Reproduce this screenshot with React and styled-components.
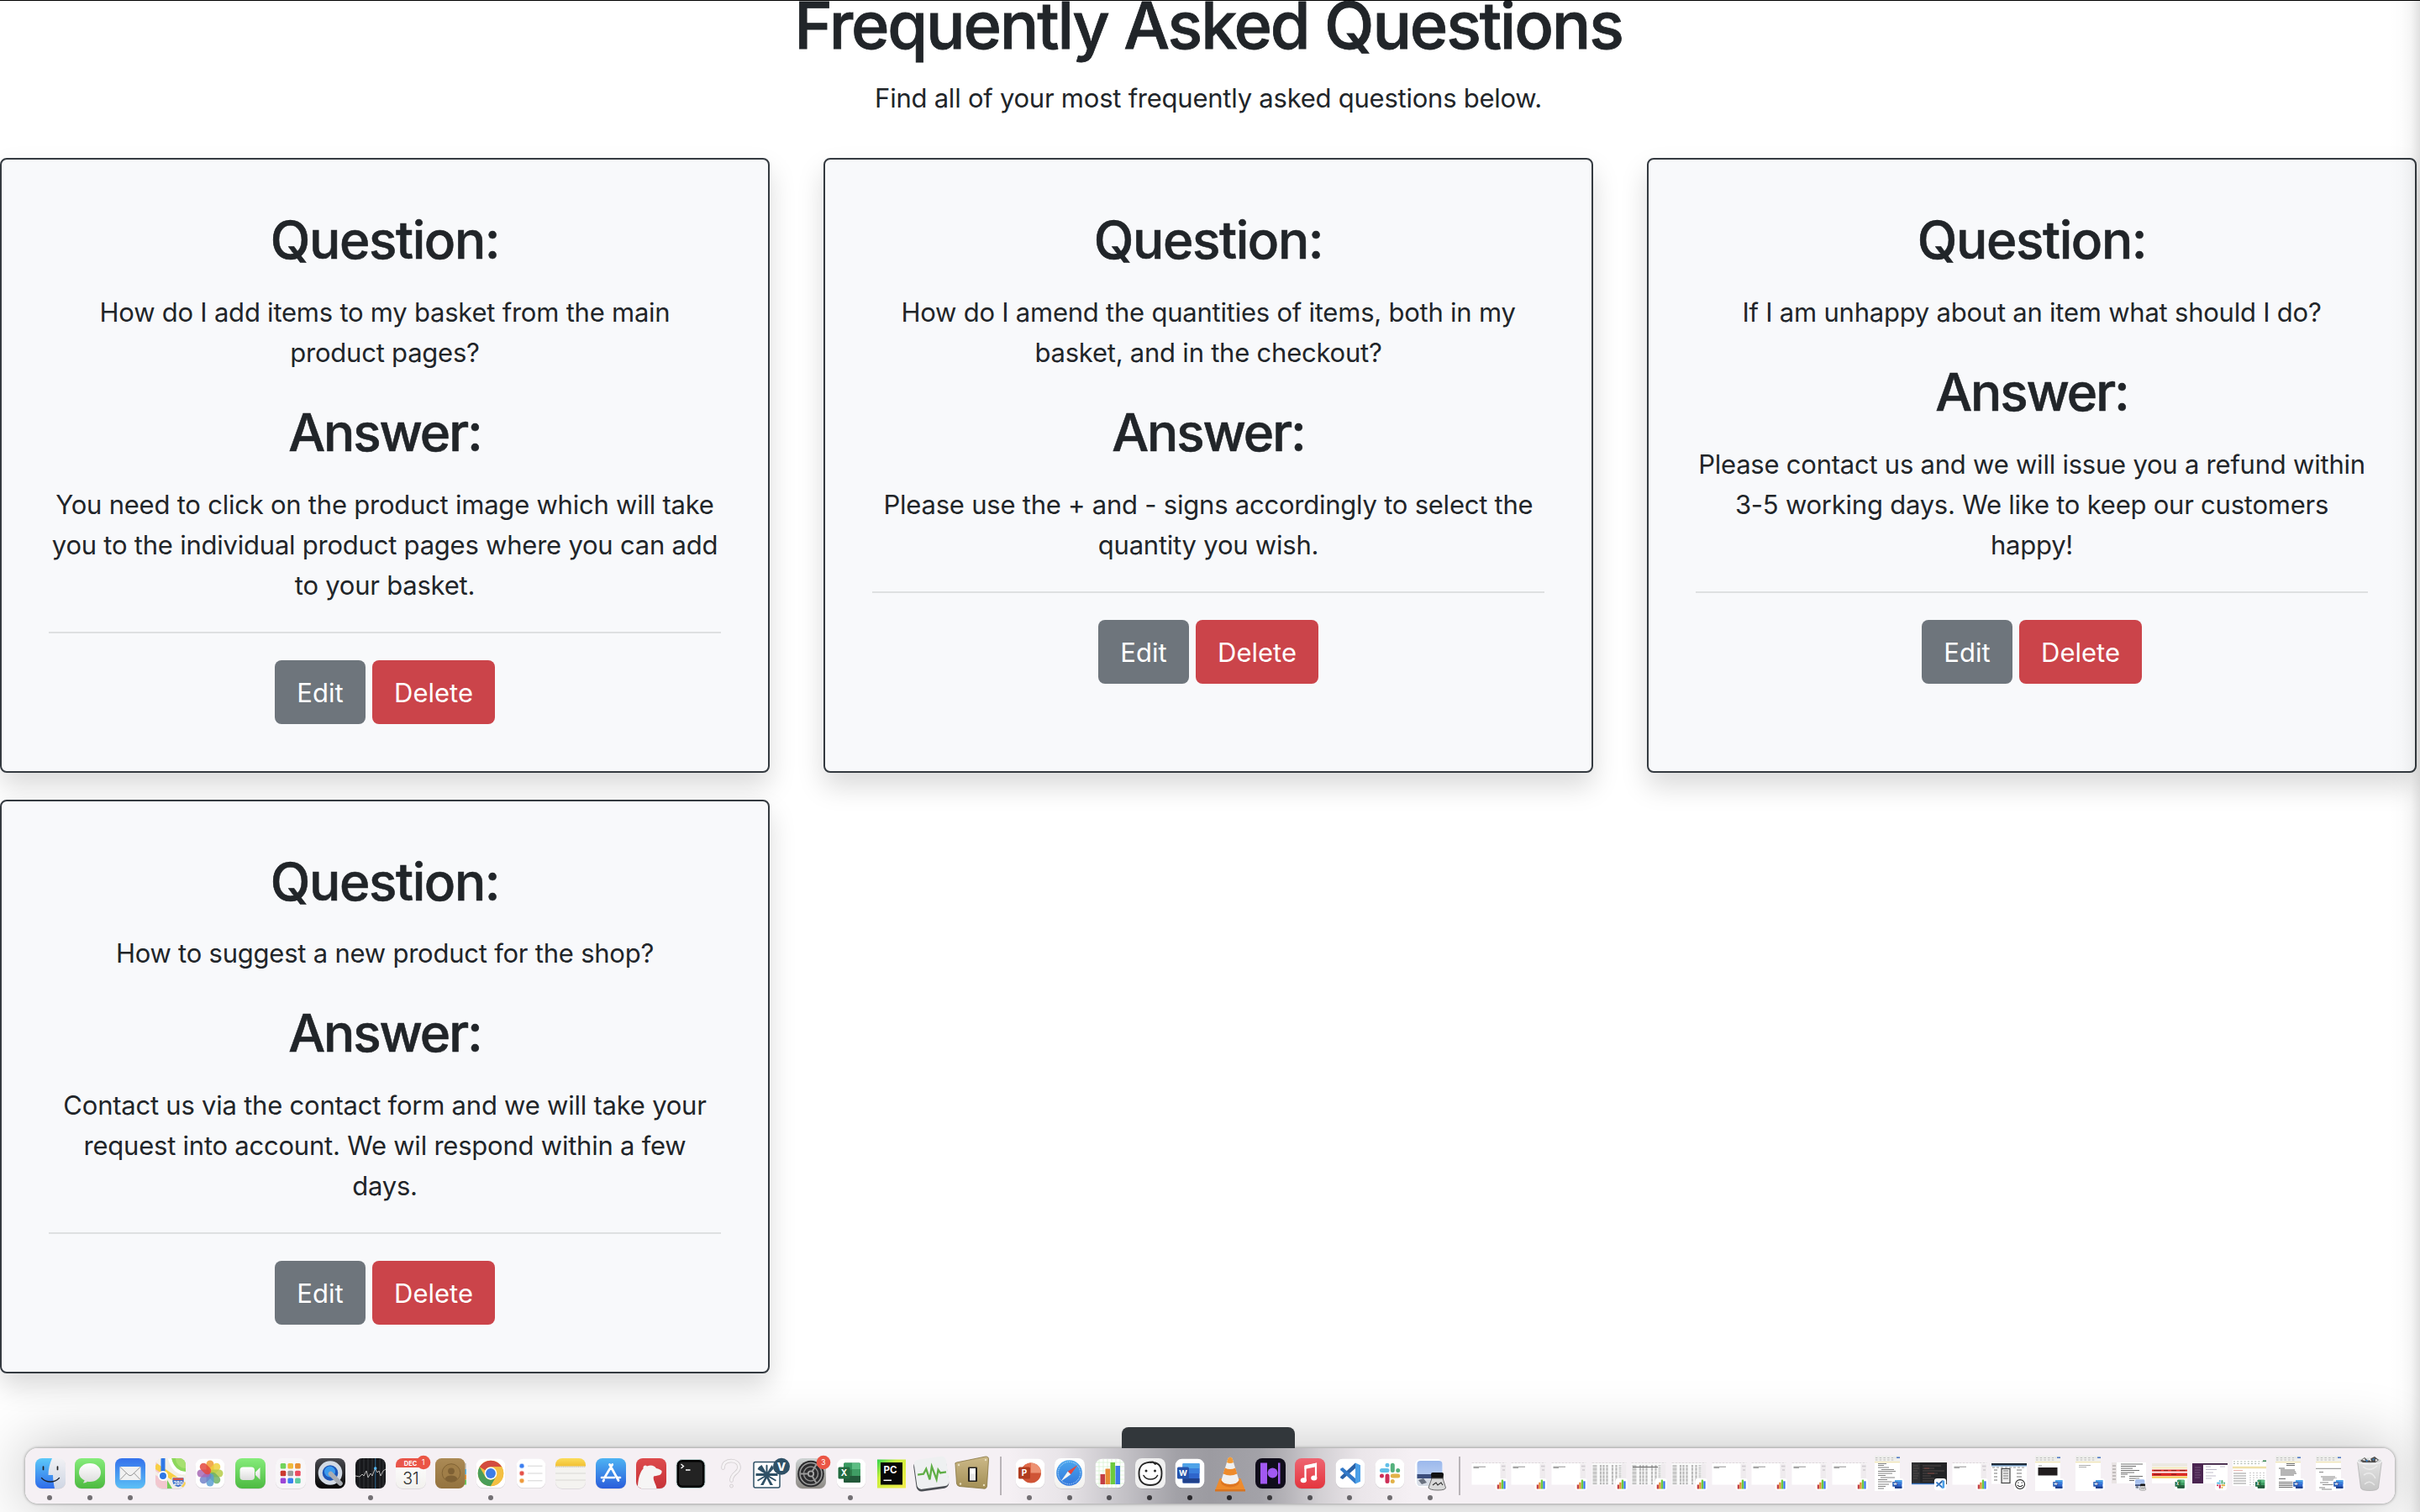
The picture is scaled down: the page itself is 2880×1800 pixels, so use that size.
import React from "react";
import styled, { createGlobalStyle } from "styled-components";

const GlobalStyle = createGlobalStyle`
  *, *::before, *::after { box-sizing: border-box; }
  html, body { margin: 0; padding: 0; background: #fff; overflow: hidden; }
  body {
    font-family: Inter, "Liberation Sans", sans-serif;
    font-size: 31px;
    line-height: 48px;
    color: #212529;
  }
`;

const Screen = styled.div`
  position: relative;
  width: 2880px;
  height: 1800px;
  overflow: hidden;
  border-top: 1px solid #000;
  background: #fff;
`;

const Page = styled.main`
  width: 2876px;
  text-align: center;
`;

const PageTitle = styled.h1`
  margin: -19px 0 15px;
  font-size: 77.5px;
  line-height: 96px;
  font-weight: 500;
  letter-spacing: -2.2px;
  -webkit-text-stroke: 0.8px currentColor;
`;

const Lead = styled.p`
  margin: 0 0 47px;
  letter-spacing: -0.24px;
`;

const CardGrid = styled.section`
  display: grid;
  grid-template-columns: repeat(3, 916px);
  column-gap: 64px;
  row-gap: 32px;
`;

const Card = styled.article`
  padding: 58px 56px 56px;
  border: 2px solid #343a40;
  border-radius: 8px;
  background: #f8f9fb;
  box-shadow: 0 16px 32px rgba(0, 0, 0, 0.15);
`;

const CardHeading = styled.h2`
  margin: 0 0 23px;
  font-size: 62px;
  line-height: 76.8px;
  font-weight: 500;
  letter-spacing: ${(p) => p.$tracking}px;
  -webkit-text-stroke: 0.6px currentColor;
`;

const CardText = styled.p`
  margin: 0 -20px ${(p) => (p.$last ? 31 : 33)}px;
  white-space: pre-line;
  letter-spacing: -0.23px;
`;

const Rule = styled.hr`
  margin: 0 0 32px;
  border: 0;
  height: 2px;
  background: #dee0e1;
`;

const Actions = styled.div`
  display: flex;
  justify-content: center;
  gap: 8px;
`;

const Button = styled.button`
  width: ${(p) => (p.$danger ? 146 : 108)}px;
  height: 76px;
  padding: 2px 0 0;
  border: 0;
  border-radius: 8px;
  background: ${(p) => (p.$danger ? "#cb444a" : "#6e757c")};
  color: #fff;
  font: inherit;
  letter-spacing: 0;
`;

const EdgeShade = styled.div`
  position: absolute;
  top: 0;
  right: 0;
  width: 36px;
  height: 1800px;
  background: linear-gradient(90deg, rgba(0,0,0,0) 0%, rgba(0,0,0,0.01) 40%, rgba(0,0,0,0.04) 70%, rgba(0,0,0,0.12) 100%);
`;

const DockLayer = styled.div`
  position: absolute;
  left: 30px;
  bottom: 10px;
  width: 2820px;
  display: flex;
  flex-direction: column;
`;

const FooterTab = styled.div`
  width: 206px;
  height: 25px;
  margin-left: 1305px;
  border-radius: 8px 8px 0 0;
  background: #32373b;
  z-index: 1;
`;

const DockBar = styled.nav`
  display: flex;
  height: 66px;
  padding-left: 6px;
  border-radius: 15px;
  background: linear-gradient(
    90deg,
    #f5f0f4 41.5%,
    #e9e5e9 43.7%,
    #c2c0c5 46.5%,
    #a2a1a7 48.6%,
    #9c9ba1 50%,
    #a3a2a8 52.1%,
    #b5b3b8 53.2%,
    #d2cfd3 54.6%,
    #ebe6ea 56.4%,
    #f5f0f4 58.5%
  );
  box-shadow: 0 0 3px 1px rgba(0, 0, 0, 0.26), 0 0 76px 4px rgba(0, 0, 0, 0.24);
`;

const Slot = styled.div`
  flex: 0 0 47.67px;
  display: flex;
  flex-direction: column;
  align-items: center;
  gap: 4px;
  padding-top: 8px;
`;

const Art = styled.svg`
  display: block;
  flex: none;
  width: 44px;
  height: 44px;
  overflow: visible;
`;

const RunningDot = styled.span`
  width: 6px;
  height: 6px;
  margin-right: 1px;
  border-radius: 50%;
  background: ${(p) => p.$color || "#737074"};
`;

const Separator = styled.span`
  flex: none;
  width: 2px;
  height: 46px;
  margin: 10px 10px 0;
  background: #b9b4b8;
`;

const HiddenDefs = styled.svg`
  position: absolute;
`;

const Gradients = () => (
  <HiddenDefs width="0" height="0">
    <defs>
      {[
        ["gFinder", "#5cc9f9", "#2f6bea"],
        ["gFinderR", "#f1f1f4", "#cfd6e4"],
        ["gGreen", "#86ec7b", "#4dba41"],
        ["gWhite", "#ffffff", "#dcdcdc"],
        ["gMail", "#3471ec", "#5cc0f6"],
        ["gPaper", "#ffffff", "#f2f1ee"],
        ["gDark", "#4a4a50", "#050505"],
        ["gStore", "#4db3f3", "#2a5ddb"],
        ["gMusic", "#ee6572", "#e4363f"],
        ["gBrown", "#ab8a55", "#94733f"],
        ["gBlueDisc", "#4aa6ee", "#3277dc"],
        ["gGrey", "#cfd4d4", "#8c8984"],
        ["gSky", "#9bb8ec", "#c9d9f4"],
        ["gYellow", "#fbdc5a", "#f2c033"],
        ["gBear", "#dd4a4c", "#c73238"],
        ["gPlate", "#ccb988", "#a38f56"],
        ["gTrash", "#e4e4e4", "#c6c6c6"],
      ].map(([id, a, b]) => (
        <linearGradient key={id} id={id} x1="0" y1="0" x2="0" y2="1">
          <stop offset="0" stopColor={a} />
          <stop offset="1" stopColor={b} />
        </linearGradient>
      ))}
      <linearGradient id="gRainbow" x1="0" y1="0" x2="1" y2="1">
        <stop offset="0" stopColor="#2fd34f" />
        <stop offset=".35" stopColor="#c9ef3c" />
        <stop offset="1" stopColor="#f3ec4a" />
      </linearGradient>
      <clipPath id="tile"><rect width="36" height="36" rx="8" /></clipPath>
    </defs>
  </HiddenDefs>
);

const Tile = ({ fill, children }) => (
  <>
    <rect y=".7" width="36" height="36" rx="8" fill="#000" opacity=".13" />
    <rect width="36" height="36" rx="8" fill={fill} />
    <g clipPath="url(#tile)">{children}</g>
  </>
);

const WhiteTile = ({ children }) => (
  <>
    <rect x=".7" y="1.4" width="34.6" height="34.6" rx="8" fill="#000" opacity=".12" />
    <rect x=".7" y=".7" width="34.6" height="34.6" rx="8" fill="#fff" />
    {children}
  </>
);

const Txt = ({ x, y, size, fill = "#fff", weight = 700, children }) => (
  <text x={x} y={y} fontSize={size} fill={fill} fontWeight={weight} textAnchor="middle" fontFamily="Inter, sans-serif">
    {children}
  </text>
);

const Finder = () => (
  <Tile fill="url(#gFinderR)">
    <path d="M0 0H20C17 7 15.500 13 15.500 20H21C21 26 22 31 23 36H0Z" fill="url(#gFinder)" />
    <path d="M9.500 10v3.500M26.500 10v3.500" stroke="#222" strokeWidth="1.700" strokeLinecap="round" />
    <path d="M7.500 23.500C13 29.500 23 29.500 28.500 23.500" fill="none" stroke="#1d2430" strokeWidth="1.300" strokeLinecap="round" />
  </Tile>
);

const Messages = () => (
  <Tile fill="url(#gGreen)">
    <path d="M18 6C25.500 6 31 10.700 31 17S25.500 28 18 28C17 28 16 27.900 15 27.700C13.500 29 11.500 29.600 9.800 29.300C10.900 28.300 11.500 27.200 11.500 26.200C7.500 24.300 5 21 5 17C5 10.700 10.500 6 18 6Z" fill="url(#gWhite)" />
  </Tile>
);

const Mail = () => (
  <Tile fill="url(#gMail)">
    <rect x="5.500" y="10" width="25" height="16" rx="1" fill="#f1f1f1" />
    <path d="M6 10.500L16 20Q18 21.500 20 20L30 10.500M6 25.500L13.500 17.700M30 25.500L22.500 17.700" fill="none" stroke="#8d8d8d" strokeWidth=".9" />
  </Tile>
);

const Maps = () => (
  <Tile fill="#f3efe6">
    <path d="M16 0H36V20Q22 18 16 0Z" fill="#8dd85b" />
    <path d="M17 0Q21 17 36 18" fill="none" stroke="#fff" strokeWidth="4" />
    <circle cx="36" cy="0" r="12" fill="#a7e070" />
    <path d="M0 4L8 12V21L0 15Z" fill="#f7c9d2" />
    <path d="M0 20L14 28V36H0Z" fill="#f2c7cf" />
    <path d="M0 9L36 33" stroke="#f8cf45" strokeWidth="6.500" />
    <path d="M14 26L20 36H14Z" fill="#74cc58" />
    <rect x="6.500" width="5" height="20" fill="#2f78e6" />
    <circle cx="9" cy="21" r="5" fill="#2f78e6" stroke="#fff" strokeWidth="2" />
    <path d="M20 23H34V28Q33 33 27 34.500Q21 33 20 28Z" fill="#3b6bc4" stroke="#fff" strokeWidth=".7" />
    <rect x="21" y="23.500" width="12" height="2.500" fill="#d9534a" />
    <Txt x="27" y="31.500" size="5.500">280</Txt>
  </Tile>
);

const petals = ["#f09a2e", "#eed13a", "#b5cc46", "#6fb264", "#5a9dd2", "#7182c8", "#a768b4", "#e4483d"];
const Photos = () => (
  <WhiteTile>
    {petals.map((c, i) => (
      <rect key={c} x="13.500" y="2.500" width="9" height="15.500" rx="4.500" fill={c} opacity=".84" transform={`rotate(${i * 45} 18 18)`} />
    ))}
  </WhiteTile>
);

const FaceTime = () => (
  <Tile fill="url(#gGreen)">
    <rect x="5.500" y="10.500" width="17.500" height="15.500" rx="4" fill="url(#gWhite)" />
    <path d="M24 16.500L29.500 11V25.500L24 20Z" fill="url(#gWhite)" />
  </Tile>
);

const gridColors = ["#71d35a", "#f0b83a", "#e88f34", "#cb3a2f", "#9c9c9c", "#ec4c62", "#9b45d6", "#3b80f0", "#5ecba1"];
const Launchpad = () => (
  <Tile fill="#f8f6f8">
    {gridColors.map((c, i) => (
      <rect key={c} x={5.700 + (i % 3) * 8.700} y={6 + Math.floor(i / 3) * 8.700} width="6.600" height="6.600" rx="1.500" fill={c} />
    ))}
  </Tile>
);

const QuickTime = () => (
  <Tile fill="url(#gDark)">
    <circle cx="18" cy="17.500" r="11.800" fill="#1e57b8" stroke="#d3dae4" strokeWidth="5" />
    <circle cx="17.500" cy="16" r="6.500" fill="#3b9bef" />
    <path d="M18.500 18.500L30 30" stroke="#a9adb3" strokeWidth="5.500" strokeLinecap="round" />
  </Tile>
);

const Stocks = () => (
  <Tile fill="#17181b">
    <path d="M5 0V36M10 0V36M15 0V36M20 0V36M29 0V36M33 0V36" stroke="#34363b" strokeWidth="1" />
    <path d="M23.700 0V36" stroke="#2c5f82" strokeWidth="1.200" />
    <path d="M0 21L5 22L8 19L10 21L13 15L15 23L18 18L20 21L23.500 12L26 17L28 15L30 21L33 15L36 13" fill="none" stroke="#c8c8c8" strokeWidth=".9" />
    <circle cx="23.700" cy="12" r="1.800" fill="#55b5f0" />
  </Tile>
);

const Badge = ({ children }) => (
  <>
    <circle cx="33" cy="5" r="8.300" fill="#eb5545" />
    <Txt x="32.800" y="8" size="8.500" weight="400">{children}</Txt>
  </>
);

const Calendar = () => (
  <>
    <Tile fill="url(#gPaper)">
      <rect width="36" height="11" fill="#e9564b" />
      <Txt x="17.500" y="8.500" size="7.500">DEC</Txt>
      <Txt x="18" y="30.500" size="19.500" fill="#2b2b2b" weight="300">31</Txt>
    </Tile>
    <Badge>1</Badge>
  </>
);

const Contacts = () => (
  <>
    <rect x="31" y="6" width="6" height="7" fill="#c9c9c9" />
    <rect x="31" y="13" width="6" height="6.500" fill="#55b8ee" />
    <rect x="31" y="19.500" width="6" height="6" fill="#e9963a" />
    <rect x="31" y="25.500" width="6" height="6" fill="#64cf5d" />
    <rect width="35.500" height="36" rx="7.500" fill="url(#gBrown)" />
    <circle cx="19" cy="17.500" r="10.800" fill="#a07e48" stroke="#7e6032" strokeWidth=".9" />
    <circle cx="19" cy="15.300" r="3.900" fill="#7f6134" />
    <path d="M11.500 24.500Q13 20.500 19 20.500T26.500 24.500Q23.500 28 19 28T11.500 24.500Z" fill="#7f6134" />
  </>
);

const Chrome = () => (
  <WhiteTile>
    <circle cx="18" cy="18" r="15.300" fill="#f3bf42" />
    <path d="M4.750 10.350A15.300 15.300 0 0 1 31.250 10.350H18A7.600 7.600 0 0 0 11.400 14.200Z" fill="#d34b3f" />
    <path d="M4.750 10.350A15.300 15.300 0 0 0 18 33.300L24.600 21.800A7.600 7.600 0 0 1 11.400 21.800Z" fill="#4a9e58" />
    <path d="M18 10.350H31.250A15.300 15.300 0 0 1 18 33.300L24.600 21.800Z" fill="#f3bf42" />
    <circle cx="18" cy="18" r="7.400" fill="#fff" />
    <circle cx="18" cy="18" r="5.900" fill="#3d7de6" />
  </WhiteTile>
);

const Reminders = () => (
  <WhiteTile>
    {["#3d7ff0", "#e5534a", "#ee9b3c"].map((c, i) => (
      <g key={c}>
        <circle cx="7" cy={9.200 + i * 8.800} r="2.400" fill={c} stroke={c} strokeOpacity=".35" strokeWidth="1.500" />
        <path d={`M14 ${9.200 + i * 8.800}H31.500`} stroke="#cfcfcf" strokeWidth=".9" />
      </g>
    ))}
  </WhiteTile>
);

const Notes = () => (
  <Tile fill="#f4f3f0">
    <rect width="36" height="9.500" fill="url(#gYellow)" />
    <path d="M0 10.200H36" stroke="#b5b0a4" strokeWidth=".9" strokeDasharray="1 .8" />
    <path d="M0 18H36M0 26H36" stroke="#d9d8d4" strokeWidth="1" />
  </Tile>
);

const AppStore = () => (
  <Tile fill="url(#gStore)">
    <path d="M19.800 7.500L10.500 23M7 23H22M26 23H29M16.500 7.500L27 26.500M9.600 26L8.900 27.200" stroke="#fff" strokeWidth="2.700" strokeLinecap="round" fill="none" />
  </Tile>
);

const Bear = () => (
  <Tile fill="url(#gBear)">
    <path d="M2 36C2 24 5 16 8.500 12.500C8 9 11 7.500 13 9.500C18 7.500 22 9 24 12C27 12.500 29 13.500 30.500 15C31 17 30 19 28 20C25 21 22 21 21 21.500C19.500 26 24 31 24.500 36Z" fill="#f6f5f5" />
  </Tile>
);

const Terminal = () => (
  <>
    <rect x="1" y="1.500" width="34" height="34" rx="7" fill="#000" stroke="#b9cfcf" strokeWidth="1" />
    <rect x="4" y="4.500" width="28" height="28" rx="4" fill="#232323" />
    <path d="M6.500 7L9.500 9.500L6.500 12M12 14H17.500" fill="none" stroke="#fff" strokeWidth="1.300" />
  </>
);

const Unknown = () => (
  <>
    <path d="M8.500 11.500C8.500 6 12.500 3 18 3S27.500 6 27.500 11C27.500 18 18.500 17 18.500 26.500" fill="none" stroke="#cfcacd" strokeWidth="4.500" strokeLinecap="round" />
    <path d="M8.500 11.500C8.500 6 12.500 3 18 3S27.500 6 27.500 11C27.500 18 18.500 17 18.500 26.500" fill="none" stroke="#f5f2f4" strokeWidth="3" strokeLinecap="round" />
    <circle cx="18.500" cy="33" r="2" fill="#f2eef1" stroke="#cfcacd" strokeWidth=".8" />
  </>
);

const VApp = () => (
  <>
    <rect x="-3" y="4.500" width="31" height="30.500" rx="2" fill="#fff" stroke="#2f5166" strokeWidth="1.500" />
    <path d="M6.500 8L11.500 16.500V8.500L12.500 7.500L13.500 8.500V16.500L18.500 8L21 12L15.500 18H25.500V21H15.500L24 26L23 27.500L14.500 22.500L20 32H16.500L12.500 24L8.500 32H5L10.500 22.500L2 27.500L1 26L9.500 21H-.5V18H9.500L1.500 13L3 10.500Z" fill="#2f5166" />
    <circle cx="30" cy="9.700" r="10" fill="#2f5166" />
    <Txt x="30" y="14.800" size="13.500" weight="800">V</Txt>
  </>
);

const Settings = () => (
  <>
    <Tile fill="url(#gGrey)">
      <circle cx="18" cy="18.500" r="15.800" fill="#2c2c2e" />
      <circle cx="18" cy="18.500" r="13" fill="none" stroke="#9b9b9b" strokeWidth="1.600" />
      <circle cx="18" cy="18.500" r="8.500" fill="none" stroke="#8e8e8e" strokeWidth="1.500" />
      <circle cx="18" cy="18.500" r="3.200" fill="#2c2c2e" stroke="#a8a8a8" strokeWidth="1.800" />
      {[30, 150, 270].map((a) => (
        <path key={a} d="M18 15V6" stroke="#9b9b9b" strokeWidth="2" transform={`rotate(${a} 18 18.500)`} />
      ))}
    </Tile>
    <Badge>3</Badge>
  </>
);

const ExcelMark = () => (
  <>
    <rect x="9" y="5.500" width="20" height="23.500" rx="1.500" fill="#2f7e4a" />
    <path d="M10 5.500H19V13.500H9V6.500Z" fill="#399a61" />
    <path d="M19 5.500H28L29 6.500V13.500H19Z" fill="#5dbd83" />
    <path d="M19 13.500H29V21H19Z" fill="#3f9d64" />
    <path d="M9 21H29V28L28 29H10L9 28Z" fill="#23593a" />
    <rect x="2.500" y="10.500" width="14" height="14" rx="1.500" fill="#236b40" />
    <Txt x="9.500" y="21.200" size="10">X</Txt>
  </>
);
const Excel = () => <WhiteTile><ExcelMark /></WhiteTile>;

const PyCharm = () => (
  <>
    <rect x="1" y="1.500" width="34" height="34" fill="url(#gRainbow)" />
    <rect x="5" y="5" width="26" height="26.500" fill="#070707" />
    <Txt x="16.500" y="17.800" size="11.500">PC</Txt>
    <path d="M8.500 26.300H18" stroke="#fff" strokeWidth="1.500" />
  </>
);

const Activity = () => (
  <g transform="rotate(-8 18 18)">
    <rect x="-1.500" y="1.700" width="39" height="36" rx="6" fill="#4b4f54" />
    <rect x="-.5" y="-.3" width="38.500" height="35.500" rx="5.500" fill="#eef0f1" />
    <path d="M2 17.500H9L13 12L15.500 25L20 10L23.500 26L27 15L29 19H36" fill="none" stroke="#5fae45" strokeWidth="2.300" />
  </g>
);

const Switcher = () => (
  <>
    <path d="M-1 7Q-2 5.500 .5 5L35 -2Q39 -2 38.500 2L36.500 33Q36 37 32 36L4 33.500Q1 33 .5 30Z" fill="url(#gPlate)" stroke="#85733f" strokeWidth=".8" />
    <rect x="14" y="10.500" width="11" height="17.500" rx="1" fill="#23211e" />
    <rect x="16" y="12" width="7" height="14.500" fill="#e8e8e8" />
    <rect x="16" y="12" width="7" height="6.500" fill="#fff" />
    {[[3, 8], [35, 2], [5, 30.500], [33, 32]].map(([x, y]) => <circle key={x} cx={x} cy={y} r="1.200" fill="#e9e0c2" />)}
  </>
);

const PowerPoint = () => (
  <WhiteTile>
    <circle cx="19" cy="17.500" r="12" fill="#cf5436" />
    <path d="M19 5.500A12 12 0 0 1 31 17.500H19Z" fill="#ed9273" />
    <path d="M7 17.500A12 12 0 0 1 19 5.500V17.500Z" fill="#e06b4b" />
    <rect x="4" y="10.500" width="14" height="14" rx="1.500" fill="#b03c1f" />
    <Txt x="11" y="21" size="10">P</Txt>
  </WhiteTile>
);

const Safari = () => (
  <Tile fill="url(#gPaper)">
    <circle cx="17.500" cy="17.500" r="15.300" fill="url(#gBlueDisc)" />
    <circle cx="17.500" cy="17.500" r="13.200" fill="none" stroke="#b9dbf7" strokeWidth="1.400" strokeDasharray=".6 1.100" />
    <path d="M27.500 8L19.300 19.300L15.700 15.700Z" fill="#e3483f" />
    <path d="M7.500 27.500L15.700 15.700L19.300 19.300Z" fill="#f3f3f3" />
  </Tile>
);

const ChartBars = () => (
  <>
    <rect x="6.500" y="19" width="5.500" height="12" fill="#c33f45" />
    <rect x="12.500" y="12.500" width="5.500" height="18.500" fill="#e88b33" />
    <rect x="18.500" y="5" width="5.500" height="26" fill="#6dca3e" />
    <rect x="24.500" y="9" width="5.500" height="22" fill="#3b7ae8" />
  </>
);

const Numbers = () => (
  <WhiteTile>
    <path d="M5 1V35M10 1V35M15 1V35M20 1V35M25 1V35M30 1V35M1 5H35M1 10H35M1 15H35M1 20H35M1 25H35M1 30H35" stroke="#d3f0cb" strokeWidth=".7" />
    <ChartBars />
  </WhiteTile>
);

const Smiley = () => (
  <Tile fill="#f0f0f0">
    <path d="M18 5C27 4 31.500 9 31.500 18C31.500 28 27 32 18 32S4.500 28 4.500 18C4.500 9 9 4.500 21 4.500L24 7" fill="#fff" stroke="#262626" strokeWidth="1.900" strokeLinecap="round" />
    <circle cx="13" cy="15" r="1.500" fill="#262626" />
    <circle cx="23.500" cy="15" r="1.500" fill="#262626" />
    <path d="M10 20.500C13 26.500 23.500 26.500 26.500 20.500" fill="none" stroke="#262626" strokeWidth="1.600" strokeLinecap="round" />
  </Tile>
);

const WordMark = () => (
  <>
    <rect x="9.500" y="6" width="20" height="23.500" rx="1.500" fill="#2f66cc" />
    <path d="M9.500 6H29.500V12H9.500Z" fill="#4fa3e8" />
    <path d="M9.500 12H29.500V18H9.500Z" fill="#3a7fdd" />
    <path d="M9.500 24H29.500V29.500H9.500Z" fill="#20418c" />
    <rect x="3" y="10.500" width="14" height="14" rx="1.500" fill="#2553ab" />
    <Txt x="10" y="21" size="9.500">W</Txt>
  </>
);
const Word = () => <WhiteTile><WordMark /></WhiteTile>;

const Vlc = () => (
  <>
    <path d="M5.500 24H30.500L36 38.500H0Z" fill="#ee8b2c" />
    <path d="M0 37H36V39.500H0Z" fill="#d77420" />
    <path d="M15.500 0Q18 -2.500 20.500 0L28.500 26Q27 31 18 31T7.500 26Z" fill="#f0f0f0" />
    <path d="M15.500 0Q18 -2.500 20.500 0L22 5Q18 7 14 5Z" fill="#f29a35" />
    <path d="M11.800 11.500Q18 14.500 24.200 11.500L26.300 18.500Q18 22.500 9.700 18.500Z" fill="#ee8b2c" />
    <path d="M7.500 26Q9 31 18 31T28.500 26Q31 33 18 34.500Q5 33 7.500 26Z" fill="#de7621" />
  </>
);

const HApp = () => (
  <Tile fill="#100d1b">
    <rect x="6" y="5.500" width="8" height="25" fill="#a259f2" />
    <circle cx="20.500" cy="17.500" r="6" fill="#a259f2" />
    <rect x="27" y="5.500" width="2.500" height="25" fill="#a259f2" />
  </Tile>
);

const Music = () => (
  <Tile fill="url(#gMusic)">
    <path d="M12.500 26V10L25 7V23" fill="none" stroke="#fff" strokeWidth="2.200" />
    <path d="M11.500 8.500L26 5.500V10L11.500 13Z" fill="#fff" />
    <ellipse cx="10.300" cy="26.300" rx="3.600" ry="3" fill="#fff" />
    <ellipse cx="22.800" cy="23.500" rx="3.600" ry="3" fill="#fff" />
  </Tile>
);

const CodeMark = () => (
  <>
    <path d="M24 5.500L30 8.300V27.700L24 30.500Z" fill="#4a9fe8" />
    <path d="M24 5.500V12L9 25L6.500 23.800Q5.500 22.800 6.500 21.800Z" fill="#2a62a8" />
    <path d="M24 30.500V24L9 11L6.500 12.200Q5.500 13.200 6.500 14.200Z" fill="#3279c8" />
  </>
);
const Code = () => <WhiteTile><CodeMark /></WhiteTile>;

const SlackMark = () => (
  <g strokeWidth="5" strokeLinecap="round" fill="none">
    <path d="M15 8.200V8.200M8.500 14.600H15" stroke="#62bfe8" />
    <path d="M21.300 8.200V14.600M27.700 14.600V14.600" stroke="#55b17d" />
    <path d="M21.300 21H27.700M21.300 27.400V27.400" stroke="#e2b249" />
    <path d="M15 21V27.400M8.500 21V21" stroke="#cd2f58" />
  </g>
);
const Slack = () => <WhiteTile><SlackMark /></WhiteTile>;

const Preview = () => (
  <>
    <rect x="0" y="1" width="33" height="33.500" rx="7" fill="#fff" />
    <rect x="2.500" y="3" width="30" height="30" rx="4" fill="url(#gSky)" />
    <rect x="2.500" y="19" width="30" height="5" fill="#3c4e7c" />
    <path d="M2.500 24H32.500V29Q32.500 33 28.500 33H6.500Q2.500 33 2.500 29Z" fill="#d8dde6" />
    <path d="M4 26L10 24L14 29L8 31Z" fill="#6b7280" />
    <path d="M19 19Q19 17 21 17H32Q34 17 34 19L33.500 25H19.500Z" fill="#111" />
    <path d="M20 24H33L36.500 35Q36.500 38 27 38T16 35Z" fill="#d9d9d9" stroke="#6d6d6d" strokeWidth="1" />
    <path d="M21 32L25 29L27 32L31 29L33 32" stroke="#333" strokeWidth="1.200" fill="none" />
  </>
);

const MiniBadge = ({ children, x = 28 }) => (
  <g transform={`translate(${x - 1.5} 23.500) scale(.42)`}>
    <rect x="1" y="1" width="34" height="34" rx="8" fill="#fff" />
    {children}
  </g>
);

const SheetThumb = () => (
  <>
    <rect x="-2.500" y="5" width="41" height="26.500" fill="#fff" />
    <path d="M-2.500 5.500H38.500" stroke="#dcd7da" strokeWidth="1.200" strokeDasharray="3 1" />
    <rect x="31.500" y="6.500" width="7" height="25" fill="#efebee" />
    <path d="M33 9.500H37.500M34 14H37" stroke="#cfcbd0" strokeWidth="1.400" />
    <path d="M-.5 10.200H14M-.5 11.400H6" stroke="#858585" strokeWidth=".9" />
    <MiniBadge x={26.500}><ChartBars /></MiniBadge>
  </>
);

const TableThumb = ({ ruled }) => (
  <>
    <rect x="-2.500" y="5" width="41" height="26.500" fill="#fafafa" />
    <path d="M-2.500 5.500H38.500" stroke="#dcd7da" strokeWidth="1.200" strokeDasharray="3 1" />
    <rect x="33" y="6.500" width="5.500" height="25" fill="#efebee" />
    <path d="M1 8V31" stroke="#b4b4b4" strokeWidth="5" strokeDasharray=".8 .5" />
    <path d="M8 8V31M11.500 8V31M15.500 8V31M22 8V31M26.500 8V31" stroke="#a2a2a2" strokeWidth="2.200" strokeDasharray=".8 .5" />
    <path d="M31 8V24" stroke="#b0b0b0" strokeWidth="3" strokeDasharray=".8 1" />
    {ruled && <path d="M-1 10.500H29" stroke="#666" strokeWidth="1" />}
    <MiniBadge x={26.500}><ChartBars /></MiniBadge>
  </>
);

const DocThumb = ({ variant }) => (
  <>
    <rect x="1" y="-3" width="30" height="42" fill="#fff" />
    <rect x="1" y="-3" width="30" height="6.500" fill="#eeeeec" />
    <path d="M2 -.5H26M2 2H24" stroke="#bdbdbd" strokeWidth="1" strokeDasharray="2.500 2.200" />
    <rect x="27" y="-1.500" width="4" height="1.500" fill="#4a74c4" />
    <path d="M1 4.600H31" stroke="#efe4b8" strokeWidth="1.500" />
    {variant === "dark" && (
      <>
        <rect x="4.500" y="11" width="23" height="9.500" fill="#211d1e" />
        <path d="M5 9H9" stroke="#777" strokeWidth=".8" />
      </>
    )}
    {variant === "short" && <path d="M5 8.500H19M5 10.500H14" stroke="#999" strokeWidth=".8" />}
    {variant === "text" && (
      <path d="M5 6.500H15M5 8.500H12M5 11H18M9 13.500H24M5 15.500H26M5 18H22M5 20.500H14M8 23H25M5 25.500H16M5 28H22M5 31H18M5 33.500H14M5 36H12" stroke="#777" strokeWidth=".9" />
    )}
    {variant === "dense" && (
      <path d="M14 6.500H24M14 8.500H24M5 12H12M7 14H24M7 16H25M7 18H26M7 20H23M5 24.500H13M5 28.500H22M5 30.500H22M5 32.500H22M5 34.500H22" stroke="#6f6f6f" strokeWidth="1" />
    )}
    {variant === "half" && (
      <path d="M1 12.300H31M5 16.500H10M7 22H24M9 24H26M9 26H24M6 29H16M9 31.500H22M5 35H12M8 37H20" stroke="#7a7a7a" strokeWidth=".9" />
    )}
    <MiniBadge x={22.500}><WordMark /></MiniBadge>
  </>
);

const EditorThumb = () => (
  <>
    <rect x="-3" y="5" width="42" height="26" fill="#232426" />
    <rect x="-3" y="5" width="10" height="26" fill="#2f3032" />
    <path d="M-1 9H5M-1 12H6M-1 15H4M-1 18H6M-1 21H5M-1 24H4M10 9H32M10 12H24M10 15H36M10 18H28M10 21H20M10 24H24M10 27H22" stroke="#5b5350" strokeWidth=".8" />
    <path d="M12 12H18M16 18H24" stroke="#8f4740" strokeWidth=".8" />
    <path d="M-3 30.500H25" stroke="#3b78c8" strokeWidth="1.400" />
    <MiniBadge x={25}><CodeMark /></MiniBadge>
  </>
);

const DesignThumb = () => (
  <>
    <rect x="-3" y="6" width="42" height="24.500" fill="#fff" />
    <rect x="-3" y="6" width="42" height="2.600" fill="#1f2a38" />
    <path d="M-3 9H39" stroke="#4a8fd6" strokeWidth=".8" />
    <path d="M-2 11H37" stroke="#bbb" strokeWidth="1.500" strokeDasharray="3 2" />
    <rect x="9" y="12.500" width="10" height="17" fill="#eee" stroke="#444" strokeWidth="1.200" />
    <path d="M11 15H17M11 18H17M11 21H17M11 24H17M0 14H4M0 18H4M0 22H4M0 26H4M27 14H33M27 18H33M27 22H33" stroke="#777" strokeWidth="1.100" />
    <MiniBadge x={25}>
      <circle cx="18" cy="18" r="13" fill="#fff" stroke="#262626" strokeWidth="2.500" />
      <path d="M10 20Q18 29 26 20M13 12V15M23 12V15" stroke="#262626" strokeWidth="2.500" fill="none" />
    </MiniBadge>
  </>
);

const PreviewThumb = () => (
  <>
    <rect x="-3" y="5" width="41" height="25" fill="#fff" />
    <rect x="-3" y="5" width="6" height="25" fill="#e9e4e4" />
    <path d="M-2 9H2M-2 13H2M-2 17H2M-2 21H2M-2 25H2" stroke="#b4aeae" strokeWidth="1.500" />
    <path d="M8 7H34M8 9.500H26M8 12H22M8 14.500H30M8 17H24M8 19H16M18 21.500H34M18 24H30M8 22H13M18 26.500H24" stroke="#717171" strokeWidth="1" />
    <g transform="translate(24 24) scale(.38)"><Preview /></g>
  </>
);

const BandThumb = () => (
  <>
    <rect x="-3" y="6" width="42" height="24" fill="#fff" />
    <rect x="-3" y="6" width="42" height="4" fill="#ece9e2" />
    <path d="M-3 11.500H39" stroke="#f0e3a8" strokeWidth="1.500" />
    <rect x="-3" y="13.500" width="42" height="2.200" fill="#e2382f" />
    <rect x="-3" y="17.500" width="42" height="3.600" fill="#dc2a24" />
    <rect x="-3" y="21.500" width="42" height="2.200" fill="#f4ca58" />
    <path d="M-1 14.600H8M11 14.600H16M20 14.600H26M30 14.600H37M-1 19.300H8M20 19.300H26" stroke="#7c201d" strokeWidth=".9" />
    <MiniBadge x={25}><ExcelMark /></MiniBadge>
  </>
);

const ChatThumb = () => (
  <>
    <rect x="-3" y="6" width="42" height="24" fill="#fff" />
    <rect x="-3" y="6" width="42" height="1.800" fill="#3c1f42" />
    <rect x="-3" y="6" width="13" height="24" fill="#4a2450" />
    <path d="M0 11H7M0 14H7M0 17H6M0 20H7M0 23H6" stroke="#7f5f86" strokeWidth=".8" />
    <path d="M13 10H19M13 13.500H26M13 17H22M13 21H25M13 24H20M30 10H36" stroke="#b9b4c4" strokeWidth=".9" />
    <MiniBadge x={25}><SlackMark /></MiniBadge>
  </>
);

const LedgerThumb = () => (
  <>
    <rect x="-2" y="2" width="40" height="31" fill="#fff" />
    <path d="M-1 4H34M-1 6.500H30" stroke="#a9b5ab" strokeWidth="1.200" strokeDasharray="2 2.200" />
    <rect x="34" y="2.500" width="4" height="1.500" fill="#2f7e4a" />
    <path d="M-2 11H38" stroke="#efe0a8" strokeWidth="2.400" />
    <path d="M-1 14.500H10" stroke="#e2a19c" strokeWidth=".8" />
    <path d="M-1 18H14M-1 21H14M-1 24H14M-1 27H14M-1 30H14" stroke="#999" strokeWidth="1" />
    <path d="M19 17V32M23 17V32M27 17V32M31 17V32M35 17V32" stroke="#888" strokeWidth=".9" strokeDasharray="1 1.800" />
    <MiniBadge x={25.500}><ExcelMark /></MiniBadge>
  </>
);

const Trash = () => (
  <>
    <path d="M3.500 3L7.500 35Q8 38.500 18 38.500T28.500 35L32.500 3Z" fill="url(#gTrash)" stroke="#b3b3b3" strokeWidth=".8" />
    <ellipse cx="18" cy="3" rx="14.700" ry="4" fill="#d7d9da" stroke="#f4f4f4" strokeWidth="1.200" />
    <path d="M7 3L12 -1L16 3L20 0L24 -2L29 2L25 5H10Z" fill="#52504f" />
    <path d="M9 2L12 0L13 3ZM16 1L19 0L20 4ZM25 1L28 2L25 4Z" fill="#f1f1f1" />
    <path d="M13 2L16 2L15 5ZM21 1L24 0L23 3Z" fill="#3b7fc0" />
    <path d="M10 10Q18 17 27 9M11 20Q20 14 25 24M12 31Q18 25 24 32" fill="none" stroke="#f2f2f2" strokeWidth="1.600" opacity=".7" />
  </>
);

const idle = null;
const dot = "#737074";
const pinned = [
  [Finder, dot], [Messages, dot], [Mail, dot], [Maps, idle], [Photos, idle], [FaceTime, idle],
  [Launchpad, idle], [QuickTime, idle], [Stocks, dot], [Calendar, idle], [Contacts, idle], [Chrome, dot],
  [Reminders, idle], [Notes, idle], [AppStore, idle], [Bear, idle], [Terminal, idle], [Unknown, idle],
  [VApp, idle], [Settings, idle], [Excel, dot], [PyCharm, idle], [Activity, idle], [Switcher, idle],
];
const recent = [
  [PowerPoint, "#737074"], [Safari, "#656367"], [Numbers, "#515054"], [Smiley, "#37363a"], [Word, "#29282c"],
  [Vlc, "#29282c"], [HApp, "#38373b"], [Music, "#515054"], [Code, "#676569"], [Slack, "#706d71"], [Preview, "#737074"],
];
const windows = [
  [SheetThumb], [SheetThumb], [SheetThumb], [TableThumb], [TableThumb, { ruled: true }], [TableThumb],
  [SheetThumb], [SheetThumb], [SheetThumb], [SheetThumb], [DocThumb, { variant: "text" }], [EditorThumb],
  [SheetThumb], [DesignThumb], [DocThumb, { variant: "dark" }], [DocThumb, { variant: "short" }],
  [PreviewThumb], [BandThumb], [ChatThumb], [LedgerThumb], [DocThumb, { variant: "dense" }],
  [DocThumb, { variant: "half" }], [Trash],
];

const DockItem = ({ icon: Icon, running, options }) => (
  <Slot>
    <Art viewBox="-4 -4 44 44"><Icon {...options} /></Art>
    {running && <RunningDot $color={running} />}
  </Slot>
);

const faqs = [
  {
    question: "How do I add items to my basket from the main\nproduct pages?",
    answer: "You need to click on the product image which will take\nyou to the individual product pages where you can add\nto your basket.",
  },
  {
    question: "How do I amend the quantities of items, both in my\nbasket, and in the checkout?",
    answer: "Please use the + and - signs accordingly to select the\nquantity you wish.",
  },
  {
    question: "If I am unhappy about an item what should I do?",
    answer: "Please contact us and we will issue you a refund within\n3-5 working days. We like to keep our customers\nhappy!",
  },
  {
    question: "How to suggest a new product for the shop?",
    answer: "Contact us via the contact form and we will take your\nrequest into account. We wil respond within a few\ndays.",
  },
];

const FaqCard = ({ question, answer }) => (
  <Card>
    <CardHeading $tracking={-1.4}>Question:</CardHeading>
    <CardText>{question}</CardText>
    <CardHeading $tracking={-2.1}>Answer:</CardHeading>
    <CardText $last>{answer}</CardText>
    <Rule />
    <Actions>
      <Button>Edit</Button>
      <Button $danger>Delete</Button>
    </Actions>
  </Card>
);

export default function App() {
  return (
    <Screen>
      <GlobalStyle />
      <Gradients />
      <Page>
        <PageTitle>Frequently Asked Questions</PageTitle>
        <Lead>Find all of your most frequently asked questions below.</Lead>
        <CardGrid>
          {faqs.map((faq) => <FaqCard key={faq.question} {...faq} />)}
        </CardGrid>
      </Page>
      <EdgeShade />
      <DockLayer>
        <FooterTab />
        <DockBar>
          {pinned.map(([icon, running], i) => <DockItem key={i} icon={icon} running={running} />)}
          <Separator />
          {recent.map(([icon, running], i) => <DockItem key={i} icon={icon} running={running} />)}
          <Separator />
          {windows.map(([icon, options], i) => <DockItem key={i} icon={icon} options={options} />)}
        </DockBar>
      </DockLayer>
    </Screen>
  );
}
